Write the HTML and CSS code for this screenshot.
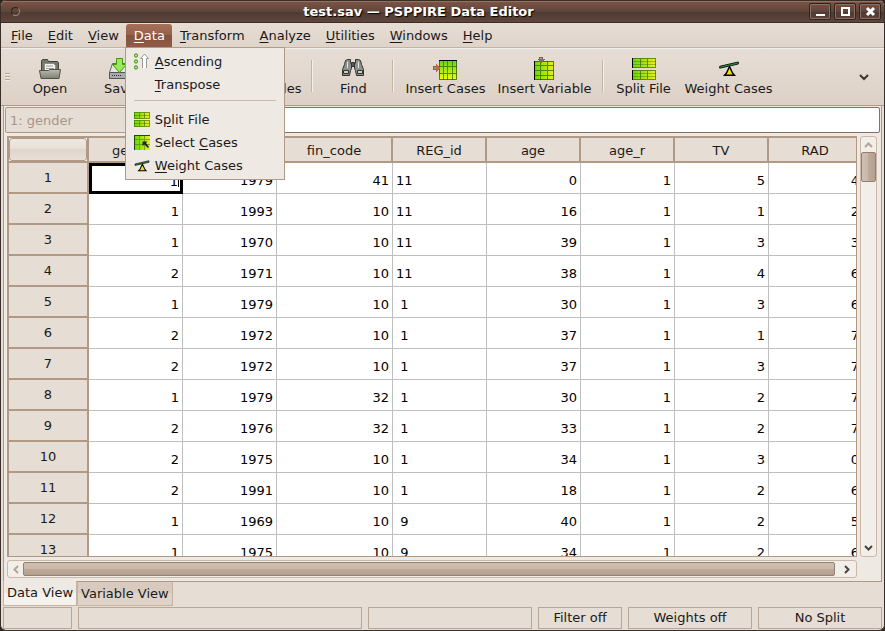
FILE: index.html
```html
<!doctype html>
<html lang="en">
<head>
  <meta charset="UTF-8" />
  <meta name="viewport" content="width=device-width, initial-scale=1.0" />
  <title>test.sav — PSPPIRE Data Editor</title>
  <link rel="stylesheet" href="styles.css">
</head>
<body>
<svg class="sprites" aria-hidden="true">
  <defs>
    <linearGradient id="lime" x1="0" y1="0" x2="1" y2="0">
      <stop offset="0" stop-color="#62d800" />
      <stop offset="1" stop-color="#eeee20" />
    </linearGradient>
    <linearGradient id="limeDown" x1="0" y1="0" x2="0" y2="1">
      <stop offset="0" stop-color="#5fd800" />
      <stop offset="1" stop-color="#f4fa20" />
    </linearGradient>
    <linearGradient id="metal" x1="0" y1="0" x2="0" y2="1">
      <stop offset="0" stop-color="#b9bcae" />
      <stop offset="1" stop-color="#7c8072" />
    </linearGradient>
    <symbol id="split" viewBox="0 0 24 22">
      <g shape-rendering="crispEdges">
        <path fill="url(#lime)" d="M0 0h24v10H0zM0 12h24v10H0z" />
        <path fill="none" stroke="#2e6b12" stroke-opacity=".4" d="M0 3.5h24M0 6.5h24M0 15.5h24M0 18.5h24" />
        <path fill="none" stroke="#3c6210" stroke-opacity=".7" d="M.5.5h23v9H.5zM.5 12.5h23v9H.5zM8.5 0v10M15.5 0v10M8.5 12v10M15.5 12v10" />
        <path stroke="#000" d="M.5 0v10M.5 12v10" />
      </g>
    </symbol>
    <symbol id="splitSmall" viewBox="0 0 16 15">
      <g shape-rendering="crispEdges">
        <path fill="url(#lime)" d="M0 0h16v7H0zM0 8h16v7H0z" />
        <path fill="none" stroke="#3c6210" stroke-opacity=".6" d="M.5.5h15v6H.5zM.5 8.5h15v6H.5zM5.5 0v7M10.5 0v7M5.5 8v7M10.5 8v7" />
        <path fill="none" stroke="#3c6210" stroke-opacity=".4" d="M0 3.5h16M0 11.5h16" />
      </g>
    </symbol>
    <symbol id="select" viewBox="0 0 16 15">
      <g shape-rendering="crispEdges">
        <path fill="url(#lime)" d="M0 0h16v15H0z" />
        <path fill="none" stroke="#3f8010" stroke-opacity=".6" d="M5.500 0v15M10.500 0v15M0 4.500h16M0 9.500h16" />
        <path fill="none" stroke="#26480a" d="M.5 15V.5H16" />
      </g>
      <path fill="#222" d="M8.500 6.500h5l-1.500 1.500 3 4-1 1-3.500-3.500-2 1.500z" />
    </symbol>
    <symbol id="weight" viewBox="0 0 20 16">
      <path fill="#eee01c" stroke="#000" stroke-width="1.400" d="M10.500 5.500l-3 6.500-2 2.300h10l-2-2.300z" />
      <path fill="#3f8d50" stroke="#0c2110" d="M.7 5.300L19.300 1v2L.7 7.200z" />
    </symbol>
  </defs>
</svg>

<div class="window">
  <header class="titlebar">
    <span class="window-menu"></span>
    <h1>test.sav — PSPPIRE Data Editor</h1>
    <div class="window-buttons">
      <button aria-label="Minimize"><svg width="11" height="11"><path fill="#fff" d="M1 8h9v2H1z" /></svg></button>
      <button aria-label="Maximize"><svg width="11" height="11"><path fill="none" stroke="#fff" stroke-width="2" d="M2 2h7v7H2z" /></svg></button>
      <button aria-label="Close"><svg width="11" height="11"><path stroke="#fff" stroke-width="3" d="M2 2l7 7M9 2l-7 7" /></svg></button>
    </div>
  </header>

  <nav class="menubar">
    <button><u>F</u>ile</button>
    <button><u>E</u>dit</button>
    <button><u>V</u>iew</button>
    <div class="menu-wrap">
      <button class="open"><u>D</u>ata</button>
      <div class="menu">
        <button>
          <svg width="16" height="17"><g fill="none" stroke="#5aa82a" stroke-width="1.300"><circle cx="2" cy="2.500" r="1.500" /><circle cx="2" cy="8.500" r="1.500" /><circle cx="2" cy="14.500" r="1.500" /></g><path fill="#fff" stroke="#999a96" d="M8.500 15V5.500h-2L10.500 1l4 4.500h-2V15" /></svg>
          <span><u>A</u>scending</span>
        </button>
        <button><svg width="16" height="16"></svg><span><u>T</u>ranspose</span></button>
        <hr>
        <button><svg width="16" height="15"><use href="#splitSmall" /></svg><span>S<u>p</u>lit File</span></button>
        <button><svg width="16" height="15"><use href="#select" /></svg><span>Select <u>C</u>ases</span></button>
        <button><svg width="16" height="12"><use href="#weight" /></svg><span><u>W</u>eight Cases</span></button>
      </div>
    </div>
    <button><u>T</u>ransform</button>
    <button><u>A</u>nalyze</button>
    <button><u>U</u>tilities</button>
    <button><u>W</u>indows</button>
    <button><u>H</u>elp</button>
  </nav>

  <div class="toolbar">
    <span class="grip"></span>
    <button class="tool">
      <svg width="24" height="24"><path fill="#74786c" stroke="#44473f" d="M3.500 15V3.500l1-1h5l1 2h9l1 1V15z" /><path fill="#f4f4f2" stroke="#8b8d85" d="M6.500 6.500h9l2 2V14h-11z" /><path stroke="#9a9c96" d="M8 9h7M8 11.500h8" /><path fill="url(#metal)" stroke="#50534a" d="M1.500 13.500h9l1.500-1h10.500l-1.500 9h-18z" /></svg>
      <span>Open</span>
    </button>
    <button class="tool">
      <svg width="24" height="24"><path fill="#e4e4e2" stroke="#666" d="M4.500 6.500h15l3 9v6h-21v-6z" /><path fill="#aaa" stroke="#555" d="M1.500 15.500h21v6h-21z" /><path stroke="#333" stroke-dasharray="1 1" d="M4 18.500h9" /><path fill="#9be860" stroke="#3e9a06" d="M8.500 1.500h6v6h4l-7 8-7-8h4z" /></svg>
      <span>Save</span>
    </button>
    <span class="divider"></span>
    <button class="tool">
      <svg width="24" height="24"><use href="#select" /></svg>
      <span>Goto</span>
    </button>
    <button class="tool">
      <svg width="24" height="24"><use href="#split" /></svg>
      <span>Variables</span>
    </button>
    <span class="divider"></span>
    <button class="tool">
      <svg width="24" height="24"><g stroke="#30332f" fill="#8e928a"><path d="M4.500 3.500l2-1h3v3l1 2v4l-1 2-1 5h-7v-6l2-5zM14.500 2.500h3l2 1 1 4 2 5v6h-7l-1-5-1-2v-4l1-2z" /><path fill="#555a53" d="M10.500 5.500h3v4h-3z" /><path fill="#cbd0c8" d="M2.500 13.500h5v3h-5zM16.500 13.500h5v3h-5z" /></g><path stroke="#e4e7e1" d="M6.500 5v6M17.500 5v6" /></svg>
      <span>Find</span>
    </button>
    <span class="divider"></span>
    <button class="tool">
      <svg width="24" height="24" shape-rendering="crispEdges"><path fill="url(#limeDown)" d="M6 3h18v20H6z" /><path fill="none" stroke="#39700e" stroke-opacity=".8" d="M10.500 3v20M14.500 3v20M19.500 3v20M6 9.500h18M6 16.500h18" /><path fill="none" stroke="#26460a" stroke-opacity=".7" d="M6.500 3.500h17v19h-17z" /><path stroke="#000" d="M6 3.500h18" /><path fill="#7aa09c" stroke="#667" d="M.5 9.500h3v3h-3z" /><path fill="#c9683a" d="M3 7l4 4-4 4z" /></svg>
      <span>Insert Cases</span>
    </button>
    <button class="tool">
      <svg width="24" height="24" shape-rendering="crispEdges"><path fill="url(#lime)" d="M2 4h20v19H2z" /><path fill="none" stroke="#39700e" stroke-opacity=".8" d="M8.500 4v19M15.500 4v19M2 8.500h20M2 13.500h20M2 18.500h20" /><path fill="none" stroke="#26460a" stroke-opacity=".7" d="M2.500 4.500h19v18h-19z" /><path stroke="#000" d="M2.500 4v19" /><path fill="#8db0ac" stroke="#667" d="M7.500.5h3v2h-3z" /><path fill="#8a6b5c" d="M5 2h8l-4 4z" /></svg>
      <span>Insert Variable</span>
    </button>
    <span class="divider"></span>
    <button class="tool">
      <svg width="24" height="24"><use href="#split" /></svg>
      <span>Split File</span>
    </button>
    <button class="tool">
      <svg width="20" height="24"><use href="#weight" /></svg>
      <span>Weight Cases</span>
    </button>
    <button class="overflow" aria-label="More tools"><svg width="12" height="8"><path fill="none" stroke="#3c3632" stroke-width="2" d="M2 2l4 4 4-4" /></svg></button>
  </div>

  <main class="notebook">
    <div class="entry-row">
      <input class="cell-ref" type="text" value="1: gender" aria-label="Current cell" disabled>
      <input class="cell-value" type="text" aria-label="Cell value">
    </div>
    <div class="sheet-area">
      <div class="sheet">
        <table>
          <colgroup>
            <col class="col-head"><col><col><col class="col-wide"><col><col><col><col><col>
          </colgroup>
          <thead>
            <tr><td class="corner"><button aria-label="Select all"></button></td><th>gender</th><th>birth</th><th>fin_code</th><th>REG_id</th><th>age</th><th>age_r</th><th>TV</th><th>RAD</th></tr>
          </thead>
          <tbody id="rows"></tbody>
        </table>
      </div>
      <div class="scroll vertical">
        <svg width="9" height="6"><path fill="none" stroke="#b7a594" stroke-width="2" d="M1 5l3.500-3.500L8 5" /></svg>
        <span class="thumb"></span>
        <svg class="end" width="9" height="6"><path fill="none" stroke="#4b433d" stroke-width="2" d="M1 1l3.500 3.500L8 1" /></svg>
      </div>
      <div class="scroll horizontal">
        <svg width="6" height="9"><path fill="none" stroke="#b7a594" stroke-width="2" d="M5 1L1.500 4.500 5 8" /></svg>
        <span class="thumb"></span>
        <svg class="end" width="6" height="9"><path fill="none" stroke="#4b433d" stroke-width="2" d="M1 1l3.500 3.500L1 8" /></svg>
      </div>
    </div>
  </main>

  <div class="tabs">
    <button class="active">Data View</button>
    <button>Variable View</button>
  </div>

  <footer class="statusbar">
    <span></span>
    <span></span>
    <span></span>
    <span>Filter off</span>
    <span>Weights off</span>
    <span>No Split</span>
  </footer>
</div>

<script>
  // gender, birth, fin_code, REG_id, age, age_r, TV, RAD
  const cases = [
    [1, 1979, 41, '11', 0, 1, 5, 4],
    [1, 1993, 10, '11', 16, 1, 1, 2],
    [1, 1970, 10, '11', 39, 1, 3, 3],
    [2, 1971, 10, '11', 38, 1, 4, 6],
    [1, 1979, 10, ' 1', 30, 1, 3, 6],
    [2, 1972, 10, ' 1', 37, 1, 1, 7],
    [2, 1972, 10, ' 1', 37, 1, 3, 7],
    [1, 1979, 32, ' 1', 30, 1, 2, 7],
    [2, 1976, 32, ' 1', 33, 1, 2, 7],
    [2, 1975, 10, ' 1', 34, 1, 3, 0],
    [2, 1991, 10, ' 1', 18, 1, 2, 6],
    [1, 1969, 10, ' 9', 40, 1, 2, 5],
    [1, 1975, 10, ' 9', 34, 1, 2, 6]
  ];
  const rows = document.getElementById('rows');

  cases.forEach((values, i) => {
    const tr = document.createElement('tr');
    const th = document.createElement('th');
    th.textContent = i + 1;
    tr.appendChild(th);
    values.forEach((value, j) => {
      const td = document.createElement('td');
      if (typeof value === 'string') td.className = 'text';
      if (i === 0 && j === 0) {
        td.className = 'current';
        td.innerHTML = `<input type="text" value="${value}" aria-label="gender, case 1">`;
      } else {
        td.textContent = value;
      }
      tr.appendChild(td);
    });
    rows.appendChild(tr);
  });
</script>
</body>
</html>
```

FILE: styles.css
```css
* {
  box-sizing: border-box;
}
body {
  margin: 0;
  background-color: #2e2622;
  color: #1a1a1a;
}
body,
button,
input {
  font-family: "DejaVu Sans", sans-serif;
  font-size: 13px;
  line-height: 16px;
}
button {
  margin: 0;
  padding: 0;
  border: none;
  background: none;
  color: inherit;
}
svg {
  display: block;
  flex: none;
}
u {
  text-underline-offset: 2px;
}
.sprites {
  position: absolute;
  width: 0;
  height: 0;
}
.window {
  display: flex;
  flex-direction: column;
  height: 100vh;
  background-color: #e6ddd4;
  border: 1px solid #3a2e28;
  border-top: none;
  border-radius: 6px;
  overflow: hidden;
}

/* title bar */
.titlebar {
  display: flex;
  align-items: center;
  height: 23px;
  flex: none;
  padding: 0 3px 0 10px;
  background: linear-gradient(#7d5547, #5f453a 50%, #4f3b33 55%, #60463b);
  border-top: 1px solid #3a2e28;
  border-bottom: 1px solid #3a2e28;
  box-shadow: inset 0 1px #97705f;
}
.window-menu {
  width: 9px;
  height: 9px;
  margin-right: 8px;
  border: 1px solid #2f231e;
  border-right-color: #a58a7d;
  border-bottom-color: #a58a7d;
  border-radius: 50%;
}
.titlebar h1 {
  flex: 1;
  margin: 0;
  font-size: 13px;
  line-height: 16px;
  text-align: center;
  color: #fff;
  text-shadow: 1px 1px 1px #000;
}
.window-buttons {
  display: flex;
  gap: 3px;
}
.window-buttons button {
  display: flex;
  align-items: center;
  justify-content: center;
  width: 22px;
  height: 17px;
  border: 1px solid #2f231e;
  border-radius: 2px;
  box-shadow: inset 0 0 0 1px #8a7266;
}

/* menus */
.menubar {
  display: flex;
  height: 25px;
  flex: none;
  padding: 1px 2px 0;
  background: linear-gradient(#e6ddd4, #dfd4ca);
  border-bottom: 1px solid #c5b3a3;
}
.menubar > button,
.menu-wrap > button {
  height: 23px;
  padding: 0 7px 0 8px;
}
.menu-wrap {
  position: relative;
}
.menu-wrap > .open {
  background: linear-gradient(#a56f58, #96604a 50%, #85523e 50%, #8f5b46);
  color: #fff;
  border-radius: 3px 3px 0 0;
}
.menu {
  position: absolute;
  z-index: 2;
  top: 23px;
  left: -1px;
  width: 160px;
  padding: 2px 8px;
  background-color: #eee9e3;
  border: 1px solid #b09a86;
}
.menu button {
  display: flex;
  align-items: center;
  gap: 5px;
  width: 100%;
  height: 23px;
  white-space: nowrap;
}
.menu hr {
  height: 1px;
  margin: 4px 0 7px;
  border: none;
  background-color: #ccb9a9;
}

/* toolbar */
.toolbar {
  display: flex;
  height: 58px;
  flex: none;
  padding: 0 14px 0 4px;
  background: linear-gradient(#e6ddd4, #ddd1c7);
  border-top: 1px solid #f3efea;
  border-bottom: 1px solid #b09a86;
}
.grip {
  width: 5px;
  height: 8px;
  margin: 24px 5px 0 0;
  background: repeating-linear-gradient(#b9a795 0 1px, #f1ece7 1px 2px, transparent 2px 3px);
}
.tool {
  display: flex;
  flex-direction: column;
  align-items: center;
  justify-content: space-between;
  min-width: 70px;
  padding: 8px 6px;
  white-space: nowrap;
}
.divider {
  width: 2px;
  margin: 11px 5px 13px 4px;
  background: linear-gradient(90deg, #c5b3a3 1px, #f3efea 1px);
}
.overflow {
  margin-left: auto;
}

/* data view page */
.notebook {
  display: flex;
  flex-direction: column;
  flex: 1;
  min-height: 0;
  margin: 0 2px;
  background-color: #eee9e3;
  border: 1px solid #b09a86;
  border-width: 0 1px;
}
.entry-row {
  display: flex;
  height: 30px;
  flex: none;
  padding: 1px 1px 3px;
}
.entry-row input {
  height: 26px;
  padding: 0 4px;
  border: 1px solid #87705f;
  border-radius: 2px;
  background-color: #fff;
}
.entry-row .cell-ref {
  width: 160px;
  background-color: #e6ddd4;
  border-color: #b09a86;
  color: #a89685;
}
.entry-row .cell-value {
  flex: 1;
  min-width: 0;
}
.sheet-area {
  display: grid;
  grid-template-columns: minmax(0, 1fr) 17px;
  grid-template-rows: minmax(0, 1fr) 18px;
  gap: 3px;
  flex: 1;
  min-height: 0;
  padding: 0 4px 3px 3px;
}
.sheet {
  overflow: hidden;
  background-color: #fff;
  border: 1px solid #b09a86;
  border-top-width: 2px;
  border-left-width: 2px;
}
table {
  width: 839px;
  min-width: 100%;
  table-layout: fixed;
  border-collapse: separate;
  border-spacing: 0;
}
col {
  width: 94px;
}
.col-head {
  width: 80px;
}
.col-wide {
  width: 116px;
}
th {
  padding: 1px 0 0;
  font-weight: normal;
  background-color: #e6ddd4;
  border-right: 2px solid #b09a86;
  border-bottom: 2px solid #b09a86;
}
thead th {
  height: 25px;
  padding-top: 3px;
}
td {
  height: 31px;
  padding: 5px 3px 0;
  text-align: right;
  white-space: pre;
  color: #000;
  border-right: 1px solid #bfbfbf;
  border-bottom: 1px solid #bfbfbf;
}
td.text {
  text-align: left;
}
td.corner {
  height: 25px;
  padding: 0;
  border-right: 2px solid #b09a86;
  border-bottom: 2px solid #b09a86;
}
.corner button {
  display: block;
  width: 100%;
  height: 23px;
  border: 1px solid #b09a86;
  border-radius: 3px;
  background: linear-gradient(#eee8e2, #e8dfd7 50%, #e0d5cb 50%, #e8dfd7);
}
td.current {
  padding: 0;
  border: none;
}
.current input {
  display: block;
  width: 100%;
  height: 31px;
  padding: 5px 2px 0;
  border: 3px solid #000;
  border-radius: 0;
  background: linear-gradient(#000, #000) no-repeat right 1px top 8px / 1px 13px #fff;
  text-align: right;
}

/* scrollbars */
.scroll {
  display: flex;
  align-items: center;
  gap: 4px;
  background-color: #f2eee9;
  border: 1px solid #cbb8a8;
  border-radius: 3px;
}
.scroll .end {
  margin-left: auto;
}
.vertical {
  flex-direction: column;
  padding: 5px 0;
}
.vertical .end {
  margin: auto 0 0;
}
.horizontal {
  padding: 0 6px 0 5px;
}
.thumb {
  border: 1px solid #93806f;
  border-radius: 2px;
}
.vertical .thumb {
  width: 15px;
  height: 30px;
  background: linear-gradient(90deg, #cfbfb2, #c9b7a9 50%, #bda999 50%, #b5a191);
}
.horizontal .thumb {
  flex: 1;
  height: 14px;
  margin-right: 5px;
  background: linear-gradient(#cfbfb2, #c9b7a9 50%, #bda999 50%, #b5a191);
}

/* page tabs */
.tabs {
  display: flex;
  height: 25px;
  flex: none;
  margin: 0 2px;
  border-top: 1px solid #b09a86;
}
.tabs button {
  height: 24px;
  padding: 0 3px;
  background: linear-gradient(#d8cabe 50%, #dfd3c8 50%);
  border: 1px solid #c5b3a3;
  border-top: none;
}
.tabs .active {
  height: 25px;
  margin-top: -1px;
  background: linear-gradient(#eee9e3 50%, #f5f2ee 50%);
}

/* status bar */
.statusbar {
  display: grid;
  grid-template-columns: 69px minmax(0, 1fr) 164px 84px 124px 124px;
  gap: 6px;
  height: 24px;
  flex: none;
  padding: 1px 2px 2px;
}
.statusbar span {
  padding: 2px 0;
  text-align: center;
  border: 1px solid #b9a795;
}
```
